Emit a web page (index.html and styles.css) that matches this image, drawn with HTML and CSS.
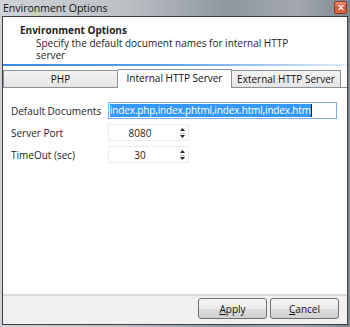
FILE: index.html
```html
<!DOCTYPE html>
<html lang="en">
<head>
<meta charset="UTF-8">
<title>Environment Options</title>
<link rel="stylesheet" href="styles.css">
</head>
<body>
<div class="window">
  <!-- Title bar -->
  <div class="titlebar">
    <span class="title">Environment Options</span>
    <span class="close">
      <svg width="8" height="7" viewBox="0 0 8 7"><path d="M1 1h1.5L4 2.6 5.5 1H7L5 3.5 7 6H5.5L4 4.4 2.5 6H1L3 3.5z" fill="#fff"/></svg>
    </span>
  </div>

  <div class="client">
    <!-- Header -->
    <div class="header">
      <h1>Environment Options</h1>
      <p>Specify the default document names for internal HTTP server</p>
    </div>
    <div class="rule"></div>

    <!-- Tabs -->
    <div class="tabs">
      <div class="tab tab-php">PHP</div>
      <div class="tab tab-internal active">Internal HTTP Server</div>
      <div class="tab tab-external">External HTTP Server</div>
    </div>

    <div class="panel">
      <div class="row">
        <label>Default Documents</label>
        <div class="field field-docs"><span class="selected">index.php,index.phtml,index.html,index.htm</span><span class="caret"></span></div>
      </div>
      <div class="row">
        <label>Server Port</label>
        <div class="field field-num">
          <span class="value">8080</span>
          <svg class="spin" width="7" height="12" viewBox="0 0 7 12"><path d="M3.5 1L6 4H1z" fill="#222"/><path d="M1 8h5L3.5 11z" fill="#222"/><rect x="1" y="6" width="5" height="1" fill="#bbb"/></svg>
        </div>
      </div>
      <div class="row">
        <label>TimeOut (sec)</label>
        <div class="field field-num">
          <span class="value">30</span>
          <svg class="spin" width="7" height="12" viewBox="0 0 7 12"><path d="M3.5 1L6 4H1z" fill="#222"/><path d="M1 8h5L3.5 11z" fill="#222"/><rect x="1" y="6" width="5" height="1" fill="#bbb"/></svg>
        </div>
      </div>
    </div>

    <!-- Buttons -->
    <div class="footer">
      <button class="btn"><u>A</u>pply</button>
      <button class="btn"><u>C</u>ancel</button>
    </div>
  </div>
</div>
</body>
</html>
```

FILE: styles.css
```css
body {
  margin: 0;
  font-family: 'Open Sans', 'Liberation Sans', Arial, sans-serif;
  font-size: 10px;
  color: #1e1e1e;
  background: #fff;
}
.window {
  width: 350px;
  height: 327px;
  box-sizing: border-box;
  display: flex;
  flex-direction: column;
  background: linear-gradient(to right, #cfd3d7 0%, #bcc1c6 35%, #8f979e 65%, #a2a8ae 85%, #7f878e 100%);
  padding: 0 2px 2px 2px;
}
.titlebar {
  height: 16px;
  display: flex;
  align-items: flex-start;
  justify-content: space-between;
}
.title {
  padding: 1px 0 0 1px;
  font-size: 10.5px;
  color: #111;
}
.close {
  width: 13px;
  height: 13px;
  margin: 1px 1px 0 0;
  border-radius: 2px;
  border: 1px solid #8a3524;
  box-sizing: border-box;
  background: linear-gradient(#eb9077, #d4553a 55%, #de6a48);
  display: flex;
  align-items: center;
  justify-content: center;
}
.client {
  flex: 1;
  display: flex;
  flex-direction: column;
  background: #fff;
  border: 1px solid #3f3f3f;
}
.header {
  padding: 7px 0 0 17px;
}
.header h1 {
  margin: 0;
  font-size: 10px;
  font-weight: 700;
  line-height: 13px;
}
.header p {
  margin: 1px 0 0 16px;
  width: 270px;
  line-height: 11.5px;
}
.rule {
  height: 2px;
  margin-top: 3px;
  background: linear-gradient(to right, #3a8ae3 0%, #58a0ea 45%, #a9cdf3 80%, #e3eefa 100%);
}
.tabs {
  display: flex;
  align-items: flex-end;
  height: 19px;
  margin-top: 2px;
}
.tab {
  height: 17px;
  box-sizing: border-box;
  border: 1px solid #8d9097;
  border-bottom: none;
  background: linear-gradient(#f4f4f4, #e4e4e4);
  text-align: center;
  line-height: 16px;
  color: #111;
}
.tab-php {
  width: 115px;
}
.tab-internal {
  width: 114px;
}
.tab-external {
  width: 109px;
  border-left: none;
}
.tab.active {
  height: 19px;
  background: #fff;
  border-left: none;
  margin-bottom: -1px;
  position: relative;
  line-height: 17px;
}
.panel {
  flex: 1;
  border-top: 1px solid #8d9097;
  border-bottom: 2px solid #d9d9d9;
  padding: 14px 0 0 8px;
  display: flex;
  flex-direction: column;
  gap: 5px;
}
.row {
  display: flex;
  align-items: center;
  height: 17px;
}
.row label {
  width: 97px;
}
.field {
  height: 17px;
  box-sizing: border-box;
  display: flex;
  align-items: center;
}
.field-docs {
  width: 229px;
  border: 1px solid #7fb0e6;
  padding-left: 1px;
}
.selected {
  background: #3399ff;
  color: #fff;
  line-height: 13px;
  letter-spacing: -0.15px;
}
.caret {
  width: 1px;
  height: 13px;
  background: #222;
}
.field-num {
  width: 81px;
  border: 1px solid #ececec;
  position: relative;
}
.value {
  flex: 1;
  text-align: center;
  padding-right: 8px;
}
.spin {
  margin-right: 2px;
}
.footer {
  height: 28px;
  background: #f0f0f0;
  display: flex;
  justify-content: flex-end;
  align-items: flex-start;
  gap: 3px;
  padding: 2px 8px 0 0;
  box-sizing: border-box;
}
.btn {
  width: 69px;
  height: 21px;
  font-family: inherit;
  font-size: 10px;
  color: #111;
  border: 1px solid #707070;
  border-radius: 3px;
  background: linear-gradient(#f3f3f3 0%, #ebebeb 50%, #dddddd 51%, #cfcfcf 100%);
  padding: 0;
}
```
